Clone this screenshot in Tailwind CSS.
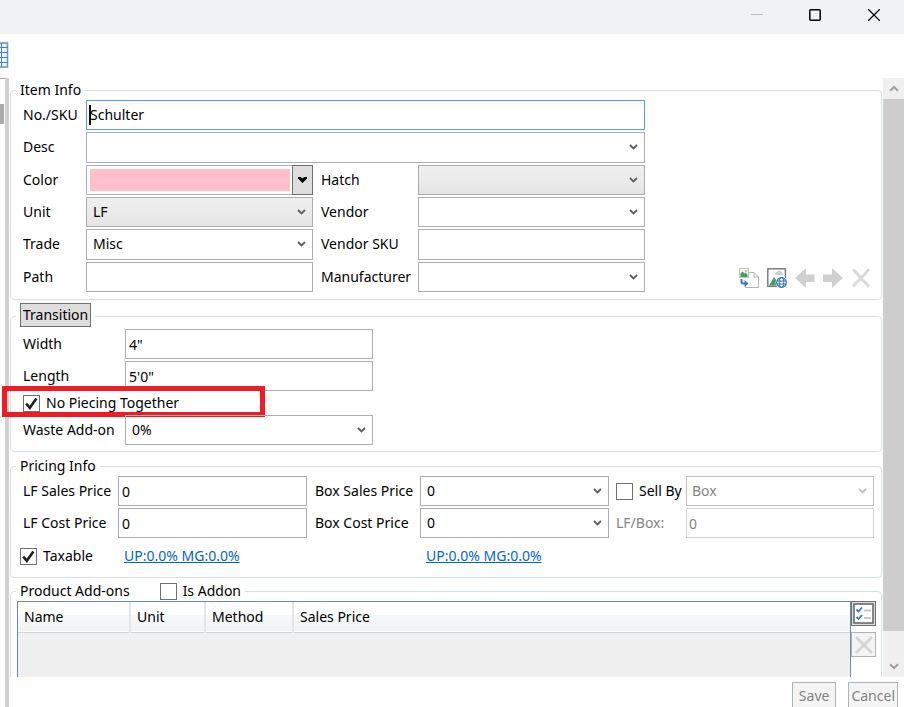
<!DOCTYPE html>
<html lang="en">

<head>
    <meta charset="UTF-8">
    <meta name="viewport" content="width=device-width, initial-scale=1.0">
    <title>Item Info</title>
    <script src="https://cdn.jsdelivr.net/npm/@tailwindcss/browser@4"></script>
</head>

<body class="h-screen overflow-hidden flex flex-col bg-white text-black text-sm leading-5 font-['Noto_Sans',sans-serif]">
    <!-- shared symbols -->
    <svg class="hidden">
        <symbol id="chevron" viewBox="0 0 9 6"><path d="M1 1l3.5 3.4L8 1" fill="none" stroke="currentColor" stroke-width="1.9"/></symbol>
        <symbol id="check" viewBox="0 0 17 17"><path d="M3.2 8.6l3.6 4.2L13.4 3.4" fill="none" stroke="#212121" stroke-width="2.6"/></symbol>
    </svg>

    <!-- title bar -->
    <header class="h-[34px] shrink-0 flex justify-end items-start bg-[#f1f2f3]">
        <button class="w-[58px] h-[30px] flex justify-center items-center" aria-label="Minimize"><svg width="12" height="12"><path d="M0 5.5h12" stroke="#bdbdbd"/></svg></button>
        <button class="w-[58px] h-[30px] flex justify-center items-center" aria-label="Maximize"><svg width="12" height="12"><rect x=".8" y=".8" width="10.4" height="10.4" rx="1" fill="none" stroke="#000" stroke-width="1.5"/></svg></button>
        <button class="w-[60px] h-[30px] flex justify-center items-center" aria-label="Close"><svg width="12" height="12"><path d="M.3.3l11.4 11.4M11.7.3L.3 11.7" stroke="#000" stroke-width="1.3"/></svg></button>
    </header>

    <!-- toolbar -->
    <div class="h-11 shrink-0 pt-2">
        <svg width="9" height="26"><rect x="-8" y="1" width="15.5" height="24" fill="#eef4fb" stroke="#6f9bcb" stroke-width="1.6"/><path d="M1.5 1v24M0 5.5h8M0 10.5h8M0 15.5h8M0 20.5h8" stroke="#4a7ebb"/></svg>
    </div>

    <div class="flex-1 min-h-0 flex">
        <aside class="w-[5px] shrink-0 pt-[25px] border-t border-[#a0a0a0]">
            <div class="w-1 h-5 bg-[#ababab]"></div>
        </aside>
        <div class="w-1 shrink-0 bg-[#d0d0d0]"></div>

        <main class="flex-1 min-w-0 flex flex-col">
            <div class="flex-1 min-h-0 flex">
                <form class="flex-1 min-w-0 overflow-hidden pt-[2px] -ml-[9px] pl-[10px] pr-px">

                    <!-- Item Info -->
                    <fieldset class="border border-[#d5dfe5] rounded pl-3 pr-[10px] pb-[7px]">
                        <legend class="-ml-[7px] px-1 h-5">Item Info</legend>
                        <div class="flex justify-between items-end">
                            <div class="grid grid-cols-[63px_227px_105px_227px] grid-rows-6 h-[192px] gap-y-[2px]">
                                <label for="sku" class="self-center">No./SKU</label>
                                <div class="col-span-3 relative flex">
                                    <input id="sku" type="text" value="Schulter" class="w-full min-w-0 border border-[#569de5] pl-[3px] outline-none">
                                    <span class="absolute left-[3px] top-[5px] w-[2px] h-5 bg-black"></span>
                                </div>
                                <label for="desc" class="self-center">Desc</label>
                                <div class="col-span-3 relative flex">
                                    <select id="desc" class="appearance-none w-full border border-[#abadb3] pl-[6px]"><option></option></select>
                                    <svg class="absolute right-[7px] top-3 w-[9px] h-[6px] text-[#606060] pointer-events-none"><use href="#chevron"/></svg>
                                </div>
                                <label for="color" class="self-center">Color</label>
                                <div class="flex border border-[#abadb3]">
                                    <div class="flex-1 m-[3px] mr-[2px] bg-[#ffc0cb]"></div>
                                    <button id="color" type="button" aria-label="Pick color" class="w-[21px] -m-px ml-0 border border-[#707070] bg-[#dddddd] flex justify-center items-center"><svg width="9" height="6"><path d="M0 0h2.5l2 1.200L6.500 0H9v1.500L4.500 6 0 1.500z"/></svg></button>
                                </div>
                                <label for="hatch" class="self-center pl-2">Hatch</label>
                                <div class="relative flex">
                                    <select id="hatch" class="appearance-none w-full border border-[#acacac] bg-linear-to-b from-[#f0f0f0] to-[#e5e5e5]"><option></option></select>
                                    <svg class="absolute right-[7px] top-3 w-[9px] h-[6px] text-[#606060] pointer-events-none"><use href="#chevron"/></svg>
                                </div>
                                <label for="unit" class="self-center">Unit</label>
                                <div class="relative flex">
                                    <select id="unit" class="appearance-none w-full border border-[#acacac] bg-linear-to-b from-[#f0f0f0] to-[#e5e5e5] pl-[6px]"><option>LF</option></select>
                                    <svg class="absolute right-[7px] top-3 w-[9px] h-[6px] text-[#606060] pointer-events-none"><use href="#chevron"/></svg>
                                </div>
                                <label for="vendor" class="self-center pl-2">Vendor</label>
                                <div class="relative flex">
                                    <select id="vendor" class="appearance-none w-full border border-[#abadb3]"><option></option></select>
                                    <svg class="absolute right-[7px] top-3 w-[9px] h-[6px] text-[#606060] pointer-events-none"><use href="#chevron"/></svg>
                                </div>
                                <label for="trade" class="self-center">Trade</label>
                                <div class="relative flex">
                                    <select id="trade" class="appearance-none w-full border border-[#abadb3] pl-[6px]"><option>Misc</option></select>
                                    <svg class="absolute right-[7px] top-3 w-[9px] h-[6px] text-[#606060] pointer-events-none"><use href="#chevron"/></svg>
                                </div>
                                <label for="vendorSku" class="self-center pl-2">Vendor SKU</label>
                                <input id="vendorSku" type="text" class="min-w-0 border border-[#abadb3] pl-[3px]">
                                <label for="path" class="self-center">Path</label>
                                <input id="path" type="text" class="min-w-0 border border-[#abadb3] pl-[3px]">
                                <label for="manufacturer" class="self-center pl-2">Manufacturer</label>
                                <div class="relative flex">
                                    <select id="manufacturer" class="appearance-none w-full border border-[#abadb3]"><option></option></select>
                                    <svg class="absolute right-[7px] top-3 w-[9px] h-[6px] text-[#606060] pointer-events-none"><use href="#chevron"/></svg>
                                </div>
                            </div>

                            <div class="flex gap-2 pb-1">
                                <button type="button" aria-label="Import image">
                                    <svg width="20" height="20"><path d="M10.5 5.5V4.5h4.5l4.5 4.5v10.5H6.5v-2" fill="#fff" stroke="#b5b5b5"/><path d="M15 4.5V9h4.5" fill="none" stroke="#b5b5b5"/><rect x=".5" y=".5" width="9" height="9" fill="#f5f5f5" stroke="#c4c4c4"/><path d="M1.5 9V5.500l2-2 2 2 1-1 2 2V9z" fill="#3f9c6d"/><circle cx="7" cy="3" r="1" fill="#e0b050"/><path d="M2.5 11v3q0 1.500 2 1.500h2" fill="none" stroke="#3b78c3" stroke-width="2"/><path d="M5.500 12l4 3.500-4 3.500z" fill="#3b78c3"/></svg>
                                </button>
                                <button type="button" aria-label="Web image">
                                    <svg width="20" height="20"><rect x=".8" y=".8" width="17.6" height="17.6" fill="#fff" stroke="#777" stroke-width="1.4"/><path d="M8 6q0-2 2-2 1-2 3-1.500 2 .5 2 2.500 1.500 0 1.500 2H9Q8 7 8 6z" fill="#cfcfcf"/><path d="M2 17.500l5-8.500 3 4v4.500z" fill="#3f9c6d"/><circle cx="14.500" cy="14.500" r="6" fill="#fff"/><circle cx="14.500" cy="14.500" r="4.800" fill="#fff" stroke="#2f6db5" stroke-width="1.200"/><ellipse cx="14.500" cy="14.500" rx="2.200" ry="4.800" fill="none" stroke="#2f6db5"/><path d="M10 13h9M10 16h9" stroke="#2f6db5"/></svg>
                                </button>
                                <button type="button" aria-label="Previous image" disabled>
                                    <svg width="20" height="20"><path d="M0 10L11 0v6.500h8.500v7.500H11V20z" fill="#d0d0d0"/></svg>
                                </button>
                                <button type="button" aria-label="Next image" disabled>
                                    <svg width="20" height="20"><path d="M20 10L9 0v6.500H0v7.500h9V20z" fill="#d0d0d0"/></svg>
                                </button>
                                <button type="button" aria-label="Remove image" disabled>
                                    <svg width="20" height="20"><path d="M2 1.500l16 17M18 1.500l-16 17" stroke="#dadada" stroke-width="3"/></svg>
                                </button>
                            </div>
                        </div>
                    </fieldset>

                    <!-- Transition -->
                    <fieldset class="mt-[3px] border border-[#d5dfe5] rounded pl-3 pb-[6px]">
                        <legend class="-ml-[7px] px-1 pb-[2px]"><button type="button" class="block h-6 px-[2px] border border-[#707070] bg-[#dddddd]">Transition</button></legend>
                        <div class="grid grid-cols-[102px_248px] gap-y-[2px]">
                            <label for="width" class="self-center">Width</label>
                            <input id="width" type="text" value="4&quot;" class="h-[30px] min-w-0 border border-[#abadb3] pl-[3px]">
                            <label for="length" class="self-center">Length</label>
                            <input id="length" type="text" value="5'0&quot;" class="h-[30px] min-w-0 border border-[#abadb3] pl-[3px]">
                        </div>
                        <div class="relative h-6 flex items-center gap-[6px]">
                            <div class="grid">
                                <input id="noPiecing" type="checkbox" checked class="peer [grid-area:1/1] appearance-none size-[17px] border border-[#707070] bg-white">
                                <svg class="[grid-area:1/1] size-[17px] invisible peer-checked:visible pointer-events-none"><use href="#check"/></svg>
                            </div>
                            <label for="noPiecing">No Piecing Together</label>
                            <div class="absolute -left-[21px] -top-[5px] w-[263px] h-[31px] border-5 border-[#ee1c24] pointer-events-none"></div>
                        </div>
                        <div class="grid grid-cols-[102px_248px]">
                            <label for="waste" class="self-center">Waste Add-on</label>
                            <div class="relative flex h-[30px]">
                                <select id="waste" class="appearance-none w-full border border-[#abadb3] pl-[6px]"><option>0%</option></select>
                                <svg class="absolute right-[7px] top-3 w-[9px] h-[6px] text-[#606060] pointer-events-none"><use href="#chevron"/></svg>
                            </div>
                        </div>
                    </fieldset>

                    <!-- Pricing Info -->
                    <fieldset class="mt-1 border border-[#d5dfe5] rounded pl-3 pr-[7px] pb-[11px]">
                        <legend class="-ml-[7px] px-1 h-5">Pricing Info</legend>
                        <div class="grid grid-cols-[95px_189px_113px_189px_77px_1fr] gap-y-[2px] whitespace-nowrap">
                            <label for="lfSales" class="self-center">LF Sales Price</label>
                            <input id="lfSales" type="text" value="0" class="h-[30px] min-w-0 border border-[#abadb3] pl-[3px]">
                            <label for="boxSales" class="self-center pl-2">Box Sales Price</label>
                            <div class="relative flex">
                                <select id="boxSales" class="appearance-none w-full border border-[#abadb3] pl-[6px]"><option>0</option></select>
                                <svg class="absolute right-[7px] top-3 w-[9px] h-[6px] text-[#606060] pointer-events-none"><use href="#chevron"/></svg>
                            </div>
                            <div class="flex items-center pl-[7px] gap-[6px]">
                                <div class="grid">
                                    <input id="sellBy" type="checkbox" class="peer [grid-area:1/1] appearance-none size-[17px] border border-[#707070] bg-white">
                                    <svg class="[grid-area:1/1] size-[17px] invisible peer-checked:visible pointer-events-none"><use href="#check"/></svg>
                                </div>
                                <label for="sellBy">Sell By</label>
                            </div>
                            <div class="relative flex">
                                <select disabled aria-label="Sell by" class="appearance-none w-full border border-[#bfbfbf] pl-[5px] text-[#838383] opacity-100"><option>Box</option></select>
                                <svg class="absolute right-[7px] top-3 w-[9px] h-[6px] text-[#bfbfbf] pointer-events-none"><use href="#chevron"/></svg>
                            </div>
                            <label for="lfCost" class="self-center">LF Cost Price</label>
                            <input id="lfCost" type="text" value="0" class="h-[30px] min-w-0 border border-[#abadb3] pl-[3px]">
                            <label for="boxCost" class="self-center pl-2">Box Cost Price</label>
                            <div class="relative flex">
                                <select id="boxCost" class="appearance-none w-full border border-[#abadb3] pl-[6px]"><option>0</option></select>
                                <svg class="absolute right-[7px] top-3 w-[9px] h-[6px] text-[#606060] pointer-events-none"><use href="#chevron"/></svg>
                            </div>
                            <label for="lfBox" class="self-center pl-[7px] text-[#838383]">LF/Box:</label>
                            <input id="lfBox" type="text" value="0" disabled class="h-[30px] min-w-0 border border-[#d0d1d4] pl-[2px] text-[#838383]">
                        </div>
                        <div class="mt-2 -ml-[3px] grid grid-cols-[104px_302px_1fr]">
                            <div class="flex items-center gap-[6px]">
                                <div class="grid">
                                    <input id="taxable" type="checkbox" checked class="peer [grid-area:1/1] appearance-none size-[17px] border border-[#707070] bg-white">
                                    <svg class="[grid-area:1/1] size-[17px] invisible peer-checked:visible pointer-events-none"><use href="#check"/></svg>
                                </div>
                                <label for="taxable">Taxable</label>
                            </div>
                            <div><a href="#" class="underline text-[#0066cc]">UP:0.0% MG:0.0%</a></div>
                            <div><a href="#" class="underline text-[#0066cc]">UP:0.0% MG:0.0%</a></div>
                        </div>
                    </fieldset>

                    <!-- Product Add-ons -->
                    <fieldset class="mt-[3px] border border-[#d5dfe5] rounded pl-[6px] pr-[5px]">
                        <legend class="-ml-px px-1 h-5 flex items-center">
                            <span>Product Add-ons</span>
                            <span class="ml-[30px] flex items-center gap-[6px]">
                                <span class="grid">
                                    <input id="isAddon" type="checkbox" class="peer [grid-area:1/1] appearance-none size-[17px] border border-[#707070] bg-white">
                                    <svg class="[grid-area:1/1] size-[17px] invisible peer-checked:visible pointer-events-none"><use href="#check"/></svg>
                                </span>
                                <label for="isAddon">Is Addon</label>
                            </span>
                        </legend>
                        <div class="flex">
                            <div class="flex-1 h-40 border border-[#688caf] bg-[#f0f0f0]">
                                <table class="w-full table-fixed border-collapse">
                                    <thead>
                                        <tr class="h-[30px] bg-linear-to-b from-white from-45% via-[#f7f8fa] via-45% to-[#f1f2f4] border-b border-[#d5d5d5] text-left">
                                            <th class="w-[112px] pl-[6px] font-normal border-r-2 border-[#e4e5e6]">Name</th>
                                            <th class="w-[75px] pl-[6px] font-normal border-r-2 border-[#e4e5e6]">Unit</th>
                                            <th class="w-[88px] pl-[6px] font-normal border-r-2 border-[#e4e5e6]">Method</th>
                                            <th class="pl-[6px] font-normal">Sales Price</th>
                                        </tr>
                                    </thead>
                                </table>
                            </div>
                            <div class="flex flex-col gap-[6px]">
                                <button type="button" aria-label="Choose add-ons" class="size-[25px] border border-[#707070] bg-[#dddddd] flex justify-center items-center">
                                    <svg width="21" height="21"><rect x="1" y="1" width="19" height="19" fill="#fff" stroke="#6b6b6b" stroke-width="1.600"/><path d="M3.500 6.500l2 2 3.500-4M3.500 14l2 2 3.500-4" fill="none" stroke="#3b78c3" stroke-width="1.800"/><path d="M11 7.500h7M11 15h7" stroke="#c8c8c8" stroke-width="1.800"/></svg>
                                </button>
                                <button type="button" disabled aria-label="Delete add-on" class="size-[25px] border border-[#adb2b5] bg-[#f4f4f4] flex justify-center items-center">
                                    <svg width="20" height="20"><path d="M2 2l16 16M18 2L2 18" stroke="#d6d6d6" stroke-width="3"/></svg>
                                </button>
                            </div>
                        </div>
                    </fieldset>
                </form>

                <!-- scroll bar -->
                <div class="w-[21px] shrink-0 flex flex-col bg-[#f0f0f0] text-[#a0a0a0]">
                    <div class="h-[21px] flex justify-center items-center"><svg class="w-[10px] h-[7px] rotate-180"><use href="#chevron"/></svg></div>
                    <div class="flex-1 mb-[25px] bg-[#cdcdcd]"></div>
                    <div class="h-[21px] flex justify-center items-center"><svg class="w-[10px] h-[7px]"><use href="#chevron"/></svg></div>
                </div>
            </div>

            <footer class="h-[30px] shrink-0 overflow-hidden pt-[5px] pr-[6px] flex justify-end items-start gap-3 text-[#838383]">
                <button type="button" disabled class="h-[27px] px-[6px] border border-[#adb2b5] bg-[#f4f4f4]">Save</button>
                <button type="button" disabled class="h-[27px] px-[2px] border border-[#adb2b5] bg-[#f4f4f4]">Cancel</button>
            </footer>
        </main>
    </div>
</body>

</html>
